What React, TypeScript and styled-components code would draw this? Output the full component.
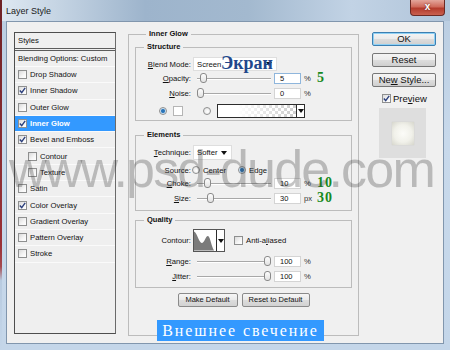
import React from 'react';
import styled, { createGlobalStyle } from 'styled-components';

const GlobalStyle = createGlobalStyle`
  html, body { margin: 0; padding: 0; background: #fff; }
  body { font-family: "Liberation Sans", Arial, sans-serif; font-size: 7.7px; color: #111; }
  * { box-sizing: border-box; }
`;

const Window = styled.div`
    position: relative;
    width: 450px;
    height: 350px;
    overflow: hidden;
    display: flex;
    flex-direction: column;
    background: linear-gradient(180deg, #b9cce0 0%, #c8d9eb 40%, #c4d6e9 100%);
    border-left: 2px solid;
    border-image: linear-gradient(180deg, #6e2226 0%, #9a3238 70%, #a44a50 76%, #b8cbe0 80%, #c4d6e9 100%) 1;
`;

const TitleBar = styled.div`
    height: 21px;
    flex: none;
    display: flex;
    align-items: flex-start;
    justify-content: space-between;
    padding-left: 4px;
    background: linear-gradient(90deg, #dde7f1 0%, #c6d5e4 12%, #9db4cc 32%, #a3b9cf 55%, #c2d3e5 78%, #b0c4d9 100%);
`;

const Title = styled.span`
    font-size: 9px;
    line-height: 22px;
    color: #1b1b1b;
`;

const CloseButton = styled.div`
    width: 35px;
    height: 16px;
    margin-right: 5px;
    border: 1px solid #6c2a24;
    border-top: none;
    border-radius: 0 0 4px 4px;
    background: linear-gradient(180deg, #e3a69b 0%, #cf6a5b 45%, #b43b2c 55%, #c9604f 100%);
    color: #fff;
    font-size: 10px;
    font-weight: bold;
    line-height: 14px;
    text-align: center;
    text-shadow: 0 0 2px #5a1a14;
`;

const Body = styled.div`
    flex: 1;
    display: flex;
    margin: 0 6px 6px 4px;
    padding: 6px 7px 0 7px;
    background: #f0f0f0;
    border: 1px solid #8196ad;
`;

const StyleList = styled.div`
    width: 102px;
    height: 302px;
    margin-top: 4px;
    flex: none;
    display: flex;
    flex-direction: column;
    background: #efefef;
    border: 1px solid #4e4e4e;
    border-right-color: #6a6a6a;
`;

const ListHeader = styled.div<{ $double?: boolean }>`
    height: ${p => (p.$double ? 18 : 16)}px;
    flex: none;
    display: flex;
    align-items: center;
    padding-left: 3px;
    border-bottom: ${p => (p.$double ? '3px double #5c5c5c' : '1px solid #fbfbfb')};
`;

const ListItem = styled.div<{ $sub?: boolean; $selected?: boolean }>`
    height: 16.3px;
    flex: none;
    display: flex;
    align-items: center;
    gap: 2px;
    padding-left: ${p => (p.$sub ? 13 : 3)}px;
    border-bottom: 1px solid #fafafa;
    background: ${p => (p.$selected ? '#3399ff' : 'transparent')};
    color: ${p => (p.$selected ? '#fff' : '#111')};
    font-weight: ${p => (p.$selected ? 'bold' : 'normal')};
`;

const CheckBox = styled.span<{ $ml?: number }>`
    width: 9px;
    height: 9px;
    flex: none;
    margin-left: ${p => p.$ml ?? 0}px;
    margin-right: 1px;
    display: flex;
    align-items: center;
    justify-content: center;
    border: 1px solid #8e8f8f;
    background: linear-gradient(135deg, #dadada 0%, #f6f6f6 60%, #fff 100%);
`;

const Main = styled.fieldset`
    width: 231px;
    height: 308px;
    margin: 0 0 0 12px;
    padding: 0 6px;
    flex: none;
    border: 1px solid #bcbcbc;
`;

const Group = styled.fieldset<{ $mt: number; $pb: number }>`
    margin: ${p => p.$mt}px 0 0 0;
    padding: 0 0 ${p => p.$pb}px 0;
    border: 1px solid #bcbcbc;
`;

const Legend = styled.legend<{ $ml: number }>`
    margin-left: ${p => p.$ml}px;
    padding: 0 3px;
    font-size: 7.5px;
    font-weight: bold;
    line-height: 12px;
`;

const Row = styled.div<{ $h: number; $mt: number }>`
    height: ${p => p.$h}px;
    margin-top: ${p => p.$mt}px;
    display: flex;
    align-items: center;
`;

const Label = styled.span`
    width: 55px;
    flex: none;
    text-align: right;
    white-space: nowrap;
`;

const Select = styled.div<{ $w: number; $h: number }>`
    position: relative;
    width: ${p => p.$w}px;
    height: ${p => p.$h}px;
    margin-left: 2px;
    display: flex;
    align-items: center;
    justify-content: space-between;
    padding: 0 4px 0 3px;
    background: #fff;
    border: 1px solid #dedede;
`;

const Arrow = styled.span`
    width: 0;
    height: 0;
    border-left: 3px solid transparent;
    border-right: 3px solid transparent;
    border-top: 4px solid #111;
`;

const Overlay = styled.span`
    position: absolute;
    left: 27px;
    top: -4px;
    font-family: "Liberation Serif", "Times New Roman", serif;
    font-size: 18px;
    font-weight: bold;
    line-height: 18px;
    color: #22478c;
    white-space: nowrap;
`;

const Slider = styled.div`
    position: relative;
    width: 74px;
    height: 12px;
    margin-left: 6px;
    flex: none;
    &::before {
        content: '';
        position: absolute;
        left: 0;
        right: 0;
        top: 6px;
        height: 1px;
        background: #a8a8a8;
        box-shadow: 0 1px 0 #fff;
    }
`;

const Thumb = styled.span`
    position: absolute;
    top: 1px;
    width: 7px;
    height: 10px;
    border: 1px solid #8a8a8a;
    border-radius: 3px;
    background: linear-gradient(180deg, #fdfdfd 0%, #e2e2e2 100%);
`;

const NumInput = styled.div<{ $focus?: boolean }>`
    width: 27px;
    height: 11px;
    margin-left: 3px;
    padding-left: 5px;
    flex: none;
    font-size: 7.5px;
    line-height: 9px;
    background: #fff;
    border: 1px solid ${p => (p.$focus ? '#8fb6dc' : '#d4d4d4')};
`;

const Unit = styled.span`
    width: 13px;
    margin-left: 3px;
    flex: none;
    color: #333;
`;

const Note = styled.span`
    font-family: "Liberation Serif", "Times New Roman", serif;
    font-size: 14px;
    font-weight: bold;
    letter-spacing: 1px;
    line-height: 12px;
    color: #178a1d;
`;

const Radio = styled.span<{ $ml: number; $on?: boolean }>`
    width: 8px;
    height: 8px;
    margin-left: ${p => p.$ml}px;
    flex: none;
    border-radius: 50%;
    border: 1px solid #8e8f8f;
    background: ${p => (p.$on
        ? 'radial-gradient(circle, #2a74b8 0%, #2a74b8 35%, #c8e2f6 60%, #eef 100%)'
        : 'radial-gradient(circle at 60% 60%, #fff 0%, #e0e0e0 100%)')};
`;

const Text = styled.span<{ $ml: number }>`
    margin-left: ${p => p.$ml}px;
    white-space: nowrap;
`;

const Swatch = styled.span`
    width: 10px;
    height: 10px;
    margin-left: 6px;
    flex: none;
    background: #fff;
    border: 1px solid #b5b5b5;
`;

const GradientPicker = styled.div`
    width: 88px;
    height: 14px;
    margin-left: 6px;
    display: flex;
    border: 1px solid #2c2c2c;
    background: #fff;
`;

const GradientFill = styled.span`
    flex: 1;
    background:
        linear-gradient(90deg, #fff 25%, rgba(255, 255, 255, 0) 95%),
        repeating-conic-gradient(#cfcfcf 0 25%, #fff 0 50%) 0 0 / 6px 6px;
`;

const ArrowPart = styled.span`
    width: 8px;
    flex: none;
    display: flex;
    align-items: center;
    justify-content: center;
    border-left: 1px solid #2c2c2c;
    background: #fff;
`;

const ContourBox = styled.div`
    width: 32px;
    height: 23px;
    margin-left: 2px;
    display: flex;
    border: 1px solid #555;
    background: #fff;
`;

const ButtonRow = styled.div`
    margin-top: 5px;
    display: flex;
    justify-content: center;
    gap: 4px;
`;

const SmallButton = styled.div<{ $w: number }>`
    width: ${p => p.$w}px;
    height: 14px;
    font-size: 7.5px;
    line-height: 12px;
    text-align: center;
    border: 1px solid #8a8a8a;
    border-radius: 2px;
    background: linear-gradient(180deg, #f6f6f6 0%, #e9e9e9 50%, #dcdcdc 51%, #d2d2d2 100%);
`;

const Side = styled.div`
    width: 64px;
    margin-left: 13px;
    padding-top: 4px;
    flex: none;
    display: flex;
    flex-direction: column;
`;

const SideButton = styled.div<{ $mt: number; $default?: boolean }>`
    height: 14px;
    margin-top: ${p => p.$mt}px;
    font-size: 9.5px;
    line-height: 12px;
    text-align: center;
    border: 1px solid ${p => (p.$default ? '#3c7fb1' : '#777')};
    border-radius: 2px;
    box-shadow: ${p => (p.$default ? 'inset 0 0 0 1px #8fd1f5' : 'none')};
    background: linear-gradient(180deg, #f4f4f4 0%, #ebebeb 50%, #dddddd 51%, #cfcfcf 100%);
`;

const PreviewRow = styled.div`
    height: 12px;
    margin-top: 5px;
    display: flex;
    align-items: center;
    font-size: 9.5px;
`;

const PreviewBox = styled.div`
    width: 47px;
    height: 50px;
    margin: 4px 0 0 7px;
    display: flex;
    align-items: center;
    justify-content: center;
    background: #dedede;
`;

const PreviewSquare = styled.div`
    width: 22px;
    height: 23px;
    background: radial-gradient(circle at 50% 50%, #fcfcf8 0%, #f1f1ea 55%, #d6d6cc 100%);
    box-shadow: 0 0 1px #c8c8c0;
`;

const Watermark = styled.div`
    position: absolute;
    left: 7px;
    top: 143px;
    font-size: 52px;
    line-height: 52px;
    letter-spacing: -1.8px;
    color: rgba(60, 60, 60, 0.3);
    white-space: nowrap;
    pointer-events: none;
`;

const Caption = styled.div`
    position: absolute;
    left: 155px;
    top: 320px;
    width: 167px;
    height: 21px;
    background: #3399ff;
    color: #fff;
    font-family: "Liberation Serif", "Times New Roman", serif;
    font-size: 16px;
    letter-spacing: 1.9px;
    line-height: 21px;
    text-align: center;
    white-space: nowrap;
`;

const styleItems = [
    { name: 'Drop Shadow', checked: false },
    { name: 'Inner Shadow', checked: true },
    { name: 'Outer Glow', checked: false },
    { name: 'Inner Glow', checked: true, selected: true },
    { name: 'Bevel and Emboss', checked: true },
    { name: 'Contour', checked: false, sub: true },
    { name: 'Texture', checked: false, sub: true },
    { name: 'Satin', checked: false },
    { name: 'Color Overlay', checked: true },
    { name: 'Gradient Overlay', checked: false },
    { name: 'Pattern Overlay', checked: false },
    { name: 'Stroke', checked: false },
];

const Check = ({ checked, ml }: { checked?: boolean; ml?: number }) => (
    <CheckBox $ml={ml}>
        {checked && (
            <svg width="7" height="7" viewBox="0 0 7 7">
                <path d="M0.8 3.6 L2.7 5.6 L6.2 0.9" fill="none" stroke="#2b3f7c" strokeWidth="1.4" />
            </svg>
        )}
    </CheckBox>
);

const SliderField = ({ pct }: { pct: number }) => (
    <Slider>
        <Thumb style={{ left: `${(pct / 100) * 67}px` }} />
    </Slider>
);

const App = () => {
    return (
        <Window>
            <GlobalStyle />
            <TitleBar>
                <Title>Layer Style</Title>
                <CloseButton>x</CloseButton>
            </TitleBar>

            <Body>
                <StyleList>
                    <ListHeader $double>Styles</ListHeader>
                    <ListHeader>Blending Options: Custom</ListHeader>
                    {styleItems.map(item => (
                        <ListItem key={item.name} $sub={item.sub} $selected={item.selected}>
                            <Check checked={item.checked} />
                            {item.name}
                        </ListItem>
                    ))}
                </StyleList>

                <Main>
                    <Legend $ml={11}>Inner Glow</Legend>

                    <Group $mt={1} $pb={2}>
                        <Legend $ml={8}>Structure</Legend>
                        <Row $h={14} $mt={4}>
                            <Label><u>B</u>lend Mode:</Label>
                            <Select $w={84} $h={14}>
                                Screen
                                <Arrow />
                                <Overlay>Экран</Overlay>
                            </Select>
                        </Row>
                        <Row $h={12} $mt={1}>
                            <Label><u>O</u>pacity:</Label>
                            <SliderField pct={5} />
                            <NumInput $focus>5</NumInput>
                            <Unit>%</Unit>
                            <Note>5</Note>
                        </Row>
                        <Row $h={12} $mt={3}>
                            <Label><u>N</u>oise:</Label>
                            <SliderField pct={0} />
                            <NumInput>0</NumInput>
                            <Unit>%</Unit>
                        </Row>
                        <Row $h={14} $mt={5}>
                            <Radio $ml={23} $on />
                            <Swatch />
                            <Radio $ml={20} />
                            <GradientPicker>
                                <GradientFill />
                                <ArrowPart><Arrow /></ArrowPart>
                            </GradientPicker>
                        </Row>
                    </Group>

                    <Group $mt={8} $pb={6}>
                        <Legend $ml={8}>Elements</Legend>
                        <Row $h={15} $mt={4}>
                            <Label><u>T</u>echnique:</Label>
                            <Select $w={39} $h={15}>
                                Softer
                                <Arrow />
                            </Select>
                        </Row>
                        <Row $h={12} $mt={4}>
                            <Label>Source:</Label>
                            <Radio $ml={1} />
                            <Text $ml={3}>Center</Text>
                            <Radio $ml={12} $on />
                            <Text $ml={3}>Edge</Text>
                        </Row>
                        <Row $h={12} $mt={1}>
                            <Label><u>C</u>hoke:</Label>
                            <SliderField pct={10} />
                            <NumInput>10</NumInput>
                            <Unit>%</Unit>
                            <Note>10</Note>
                        </Row>
                        <Row $h={12} $mt={3}>
                            <Label><u>S</u>ize:</Label>
                            <SliderField pct={15} />
                            <NumInput>30</NumInput>
                            <Unit>px</Unit>
                            <Note>30</Note>
                        </Row>
                    </Group>

                    <Group $mt={3} $pb={5}>
                        <Legend $ml={8}>Quality</Legend>
                        <Row $h={23} $mt={3}>
                            <Label>Contour:</Label>
                            <ContourBox>
                                <svg width="23" height="21" viewBox="0 0 23 21">
                                    <path d="M0 1 C3 2 5 12 8 13 C11 14 12 5 15 6 C17 7 18 16 21 21 L0 21 Z" fill="#7b7b7b" />
                                </svg>
                                <ArrowPart><Arrow /></ArrowPart>
                            </ContourBox>
                            <Check ml={9} />
                            <Text $ml={2}>Anti-a<u>l</u>iased</Text>
                        </Row>
                        <Row $h={12} $mt={3}>
                            <Label><u>R</u>ange:</Label>
                            <SliderField pct={100} />
                            <NumInput>100</NumInput>
                            <Unit>%</Unit>
                        </Row>
                        <Row $h={12} $mt={3}>
                            <Label><u>J</u>itter:</Label>
                            <SliderField pct={100} />
                            <NumInput>100</NumInput>
                            <Unit>%</Unit>
                        </Row>
                    </Group>

                    <ButtonRow>
                        <SmallButton $w={60}>Make Default</SmallButton>
                        <SmallButton $w={68}>Reset to Default</SmallButton>
                    </ButtonRow>
                </Main>

                <Side>
                    <SideButton $mt={0} $default>OK</SideButton>
                    <SideButton $mt={7}>Reset</SideButton>
                    <SideButton $mt={6}>Ne<u>w</u> Style...</SideButton>
                    <PreviewRow>
                        <Check checked ml={10} />
                        <Text $ml={1}>Pre<u>v</u>iew</Text>
                    </PreviewRow>
                    <PreviewBox>
                        <PreviewSquare />
                    </PreviewBox>
                </Side>
            </Body>

            <Watermark>www.psd-dude.com</Watermark>
            <Caption>Внешнее свечение</Caption>
        </Window>
    );
}

export default App;
